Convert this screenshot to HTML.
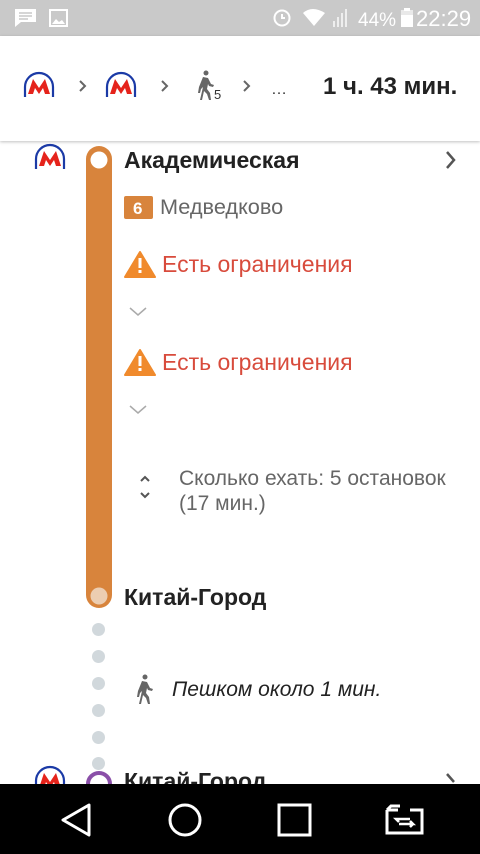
<!DOCTYPE html>
<html><head><meta charset="utf-8"><style>
body{margin:0;width:480px;height:854px;position:relative;overflow:hidden;background:#fff;font-family:"Liberation Sans","Noto Sans CJK SC",sans-serif}
.a{position:absolute}
.sb{top:0;left:0;width:480px;height:36px;background:#c9c9c9}
.hdr{top:36px;left:0;width:480px;height:105px;background:#fff;box-shadow:0 1px 3px rgba(0,0,0,.25)}
.t{white-space:nowrap}
.red{color:#d84b3c;font-size:23px}
.nav{top:784px;left:0;width:480px;height:70px;background:#000}
.dot{left:92px;width:13px;height:13px;border-radius:50%;background:#d1d8dc}
</style></head><body>
<div class="a sb"></div>
<svg class="a" style="left:0;top:0" width="480" height="36">
<g fill="#fff"><path d="M15 9h21v13H21l-6 5z"/></g>
<g stroke="#c9c9c9" stroke-width="1.6"><path d="M19 13h13M19 16h13M19 19h9"/></g>
<rect x="50" y="10" width="17" height="16" fill="none" stroke="#fff" stroke-width="2"/>
<path d="M52 24l4-5 3 3 3-2 3 4z" fill="#fff"/>
<circle cx="282" cy="18" r="7.5" fill="none" stroke="#fff" stroke-width="2"/><path d="M282 14v4h3" stroke="#fff" stroke-width="2" fill="none"/>
<path d="M303 13q9-8 22 0l-11 13z" fill="#fff"/>
<g fill="#eee"><rect x="333" y="21" width="2" height="6"/><rect x="337" y="17" width="2" height="10"/><rect x="341" y="13" width="2" height="14"/><rect x="345" y="9" width="2" height="18"/></g>
<text x="358" y="26" fill="#fff" font-size="19" font-family="Liberation Sans">44%</text>
<rect x="401" y="10" width="12" height="17" fill="#fff" opacity=".6"/><rect x="401" y="15" width="12" height="12" fill="#fff"/><rect x="404" y="8" width="6" height="3" fill="#fff"/>
<text x="416" y="26" fill="#fff" font-size="22" font-family="Liberation Sans">22:29</text>
</svg>
<div class="a hdr"></div>
<svg class="a" style="left:0;top:36px" width="480" height="105">
<g><path d="M25 61V51a14 14 0 0 1 28 0v10" fill="none" stroke="#1b3aa6" stroke-width="2.2"/><path d="M28 58l5-15 6 9 6-9 5 15h-5l-2-6-4 6-4-6-2 6z" fill="#e5231b"/></g>
<g transform="translate(82 0)"><path d="M25 61V51a14 14 0 0 1 28 0v10" fill="none" stroke="#1b3aa6" stroke-width="2.2"/><path d="M28 58l5-15 6 9 6-9 5 15h-5l-2-6-4 6-4-6-2 6z" fill="#e5231b"/></g>
<g stroke="#666" stroke-width="2" fill="none"><path d="M80 45l5 5-5 5M162 45l5 5-5 5M244 45l5 5-5 5"/></g>
<g fill="#666"><circle cx="206" cy="37" r="2.5"/><path d="M203 41l5 1 3 6 3 1-1 2-4-1-1-2-1 5 3 4 1 7h-2l-2-6-3-3-2 9h-2l3-13-2 2-1 4h-2l1-6z"/></g>
<text x="214" y="63" font-size="13" fill="#333" font-family="Liberation Sans">5</text>
<text x="271" y="58" font-size="16" fill="#333" font-family="Liberation Sans">…</text>
</svg>
<div class="a t" style="left:323px;top:73px;font-size:24px;font-weight:bold;color:#222">1 ч. 43 мин.</div>

<svg class="a" style="left:0;top:142px" width="480" height="642">
<g transform="translate(11 -34)"><path d="M25 61V51a14 14 0 0 1 28 0v10" fill="none" stroke="#1b3aa6" stroke-width="2.2"/><path d="M28 58l5-15 6 9 6-9 5 15h-5l-2-6-4 6-4-6-2 6z" fill="#e5231b"/></g>
<rect x="86" y="4" width="26" height="462" rx="13" fill="#d8843c"/>
<circle cx="99" cy="18" r="8.5" fill="#fff"/>
<circle cx="99" cy="454" r="8.5" fill="#eccdb1"/>
<path d="M447 10l7 8-7 8" stroke="#555" stroke-width="2.5" fill="none"/>
<rect x="124" y="54" width="29" height="23" rx="2" fill="#d8843c"/>
<text x="133" y="72" fill="#fff" font-size="17" font-weight="bold" font-family="Liberation Sans">6</text>
<g><path d="M140 110l15 25h-30z" fill="#f08a2c" stroke="#f08a2c" stroke-width="2" stroke-linejoin="round"/><rect x="138.5" y="116" width="3" height="10" fill="#fff"/><rect x="138.5" y="128" width="3" height="3" fill="#fff"/></g>
<g transform="translate(0 98)"><path d="M140 110l15 25h-30z" fill="#f08a2c" stroke="#f08a2c" stroke-width="2" stroke-linejoin="round"/><rect x="138.5" y="116" width="3" height="10" fill="#fff"/><rect x="138.5" y="128" width="3" height="3" fill="#fff"/></g>
<path d="M130 166l8 7 8-7M130 264l8 7 8-7" stroke="#aaa" stroke-width="1.5" fill="none"/>
<path d="M141 339l4-4 4 4M141 351l4 4 4-4" stroke="#555" stroke-width="2" fill="none"/>
<g fill="#666"><circle cx="145" cy="535" r="2.5"/><path d="M142 539l5 1 3 6 3 1-1 2-4-1-1-2-1 5 3 4 1 7h-2l-2-6-3-3-2 9h-2l3-13-2 2-1 4h-2l1-6z"/></g>
</svg>
<div class="a t" style="left:124px;top:147px;font-size:23px;font-weight:bold;color:#222">Академическая</div>
<div class="a t" style="left:160px;top:194px;font-size:21.7px;color:#666">Медведково</div>
<div class="a t red" style="left:162px;top:251px">Есть ограничения</div>
<div class="a t red" style="left:162px;top:349px">Есть ограничения</div>
<div class="a" style="left:179px;top:466px;font-size:21px;color:#666;line-height:25px;white-space:nowrap">Сколько ехать: 5 остановок<br>(17 мин.)</div>
<div class="a t" style="left:124px;top:584px;font-size:23px;font-weight:bold;color:#222">Китай-Город</div>
<div class="a t" style="left:172px;top:678px;font-size:21px;font-style:italic;color:#222">Пешком около 1 мин.</div>
<div class="a dot" style="top:623px"></div>
<div class="a dot" style="top:650px"></div>
<div class="a dot" style="top:677px"></div>
<div class="a dot" style="top:704px"></div>
<div class="a dot" style="top:731px"></div>
<div class="a dot" style="top:757px"></div>
<svg class="a" style="left:0;top:760px" width="480" height="24">
<g transform="translate(11 -30)"><path d="M25 61V51a14 14 0 0 1 28 0v10" fill="none" stroke="#1b3aa6" stroke-width="2.2"/><path d="M28 58l5-15 6 9 6-9 5 15h-5l-2-6-4 6-4-6-2 6z" fill="#e5231b"/></g>
<circle cx="99" cy="24" r="11" fill="#fff" stroke="#8a4fa8" stroke-width="4"/>
<path d="M447 14l7 8" stroke="#555" stroke-width="2.5"/>
</svg>
<div class="a t" style="left:124px;top:768px;font-size:23px;font-weight:bold;color:#222">Китай-Город</div>
<div class="a nav"></div>
<svg class="a" style="left:0;top:784px" width="480" height="70">
<g fill="none" stroke="#fff" stroke-width="3">
<path d="M89 21L63 36l26 15z" stroke-linejoin="round"/>
<circle cx="185" cy="36" r="15"/>
<rect x="279" y="21" width="31" height="30"/>
<path d="M387 26v23h35V26h-12M398 26h-11M387 26l4-4h9"/>
<path d="M399 40h14l-3-3M410 43l3-3M410 35h-14l3 3" stroke-width="2.5"/>
</g>
</svg>
</body></html>
